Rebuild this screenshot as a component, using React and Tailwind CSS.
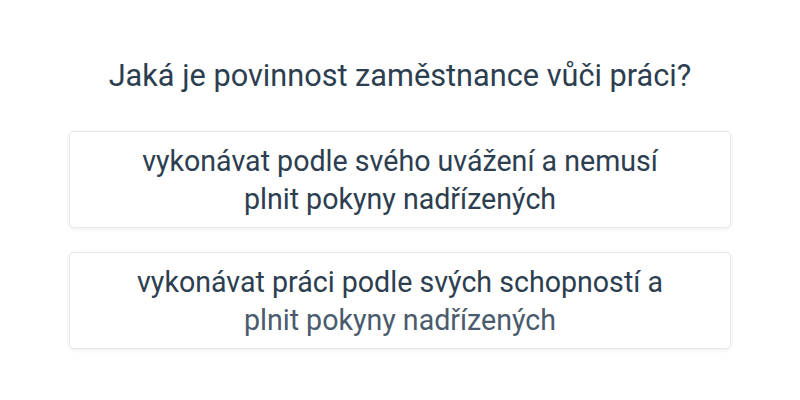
export default function App() {
  return (
    <div className="w-[800px] h-[400px] bg-white flex flex-col items-center pt-[55px]" style={{ fontFamily: "Roboto, sans-serif" }}>
      <h1 className="text-[30.7px] leading-[42px] text-[#2c3e50] font-normal">Jaká je povinnost zaměstnance vůči práci?</h1>
      <div className="w-[662px] mt-[34px] flex flex-col gap-[24px]">
        <div className="rounded-[5px] border border-[#e8e8e8] shadow-[0_1px_4px_rgba(0,0,0,0.08)] bg-white h-[97px] flex items-center justify-center text-center px-6">
          <p className="text-[28.6px] leading-[38px] text-[#2c3e50]">vykonávat podle svého uvážení a nemusí<br />plnit pokyny nadřízených</p>
        </div>
        <div className="rounded-[5px] border border-[#e8e8e8] shadow-[0_1px_4px_rgba(0,0,0,0.08)] bg-white h-[97px] flex items-center justify-center text-center px-6">
          <p className="text-[28.6px] leading-[38px] text-[#2c3e50]">vykonávat práci podle svých schopností a<br /><span className="text-[#4a5b6d]">plnit pokyny nadřízených</span></p>
        </div>
      </div>
    </div>
  );
}
